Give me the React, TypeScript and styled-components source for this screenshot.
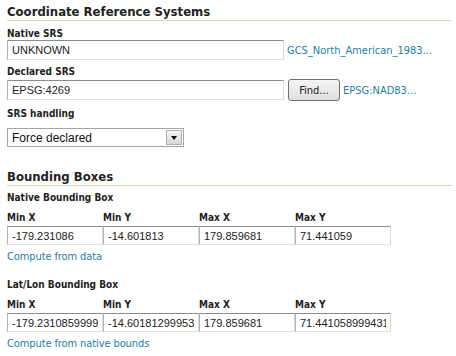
import React from 'react'
import styled, { createGlobalStyle } from 'styled-components'

const GlobalStyle = createGlobalStyle`
  html, body {
    margin: 0;
    padding: 0;
    background: #fff;
  }
`

const Page = styled.div`
  font-family: 'DejaVu Sans Condensed', 'DejaVu Sans', sans-serif;
  font-stretch: condensed;
  color: #222;
  padding: 4px 4px 0 7px;
`

const Heading = styled.h2<{ $gap?: number }>`
  margin: ${({ $gap }) => $gap || 0}px 0 0;
  font-size: 13px;
  line-height: 16px;
  font-weight: bold;
  border-bottom: 1px solid #d5dca9;
`

const Label = styled.div<{ $top?: number }>`
  margin-top: ${({ $top }) => $top || 0}px;
  font-size: 10px;
  line-height: 12px;
  font-weight: bold;
`

const Row = styled.div<{ $top?: number; $height?: number }>`
  display: flex;
  align-items: center;
  gap: 3px;
  margin-top: ${({ $top }) => $top || 0}px;
  height: ${({ $height }) => $height || 20}px;
`

const TextInput = styled.input<{ $width: number; $height?: number }>`
  box-sizing: border-box;
  width: ${({ $width }) => $width}px;
  height: ${({ $height }) => $height || 20}px;
  margin: 0;
  padding: 0 4px;
  border: 1px solid;
  border-color: #8c8c8c #d9d9d9 #e2e2e2 #b4b4b4;
  font-family: 'Liberation Sans', Arial, sans-serif;
  font-size: 11px;
  color: #222;
  background: #fff;
  outline: none;
`

const Link = styled.a`
  font-size: 11px;
  line-height: 13px;
  color: #1f7fa2;
  text-decoration: none;
  cursor: pointer;
`

const BlockLink = styled(Link)<{ $top?: number }>`
  display: block;
  margin-top: ${({ $top }) => $top || 0}px;
  letter-spacing: -0.1px;
`

const Button = styled.button`
  box-sizing: border-box;
  height: 22px;
  width: 52px;
  margin-left: 1px;
  padding: 0;
  border: 1px solid #707070;
  border-radius: 3px;
  background: linear-gradient(#f6f6f6, #dedede);
  font-family: 'DejaVu Sans Condensed', 'DejaVu Sans', sans-serif;
  font-stretch: condensed;
  font-size: 11px;
  color: #222;
`

const SelectBox = styled.div`
  box-sizing: border-box;
  display: flex;
  align-items: center;
  justify-content: space-between;
  width: 177px;
  height: 19px;
  margin-top: 8px;
  padding: 0 1px 0 4px;
  border: 1px solid #a5a5a5;
  background: #fff;
  font-family: 'Liberation Sans', Arial, sans-serif;
  font-size: 12px;
  color: #111;
`

const SelectArrow = styled.div`
  box-sizing: border-box;
  display: flex;
  align-items: center;
  justify-content: center;
  width: 16px;
  height: 15px;
  border: 1px solid #b0b0b0;
  background: linear-gradient(#f4f4f4, #d8d8d8);
  &:after {
    content: '';
    border-top: 4px solid #000;
    border-left: 3.5px solid transparent;
    border-right: 3.5px solid transparent;
  }
`

const BoxGrid = styled.div<{ $top?: number }>`
  display: grid;
  grid-template-columns: repeat(4, 96px);
  margin-top: ${({ $top }) => $top || 0}px;
`

const BoxCell = styled.div`
  display: flex;
  flex-direction: column;
  gap: 2px;
`

interface IBounds {
  minX: string
  minY: string
  maxX: string
  maxY: string
}

const BoundingBox = ({ bounds }: { bounds: IBounds }) => {
  const cells: [string, string][] = [
    ['Min X', bounds.minX],
    ['Min Y', bounds.minY],
    ['Max X', bounds.maxX],
    ['Max Y', bounds.maxY],
  ]
  return (
    <BoxGrid $top={8}>
      {cells.map(([name, value]) => (
        <BoxCell key={name}>
          <Label>{name}</Label>
          <TextInput $width={96} $height={19} readOnly value={value} />
        </BoxCell>
      ))}
    </BoxGrid>
  )
}

export default function App() {
  return (
    <Page>
      <GlobalStyle />
      <Heading>Coordinate Reference Systems</Heading>
      <Label $top={7}>Native SRS</Label>
      <Row>
        <TextInput $width={277} readOnly value="UNKNOWN" />
        <Link>GCS_North_American_1983...</Link>
      </Row>
      <Label $top={6}>Declared SRS</Label>
      <Row $top={1} $height={22}>
        <TextInput $width={277} readOnly value="EPSG:4269" />
        <Button>Find...</Button>
        <Link>EPSG:NAD83...</Link>
      </Row>
      <Label $top={7}>SRS handling</Label>
      <SelectBox>
        <span>Force declared</span>
        <SelectArrow />
      </SelectBox>

      <Heading $gap={22}>Bounding Boxes</Heading>
      <Label $top={6}>Native Bounding Box</Label>
      <BoundingBox bounds={{ minX: '-179.231086', minY: '-14.601813', maxX: '179.859681', maxY: '71.441059' }} />
      <BlockLink $top={5}>Compute from data</BlockLink>
      <Label $top={16}>Lat/Lon Bounding Box</Label>
      <BoundingBox
        bounds={{ minX: '-179.23108599999', minY: '-14.601812999539', maxX: '179.859681', maxY: '71.441058999431' }}
      />
      <BlockLink $top={5}>Compute from native bounds</BlockLink>
    </Page>
  )
}
